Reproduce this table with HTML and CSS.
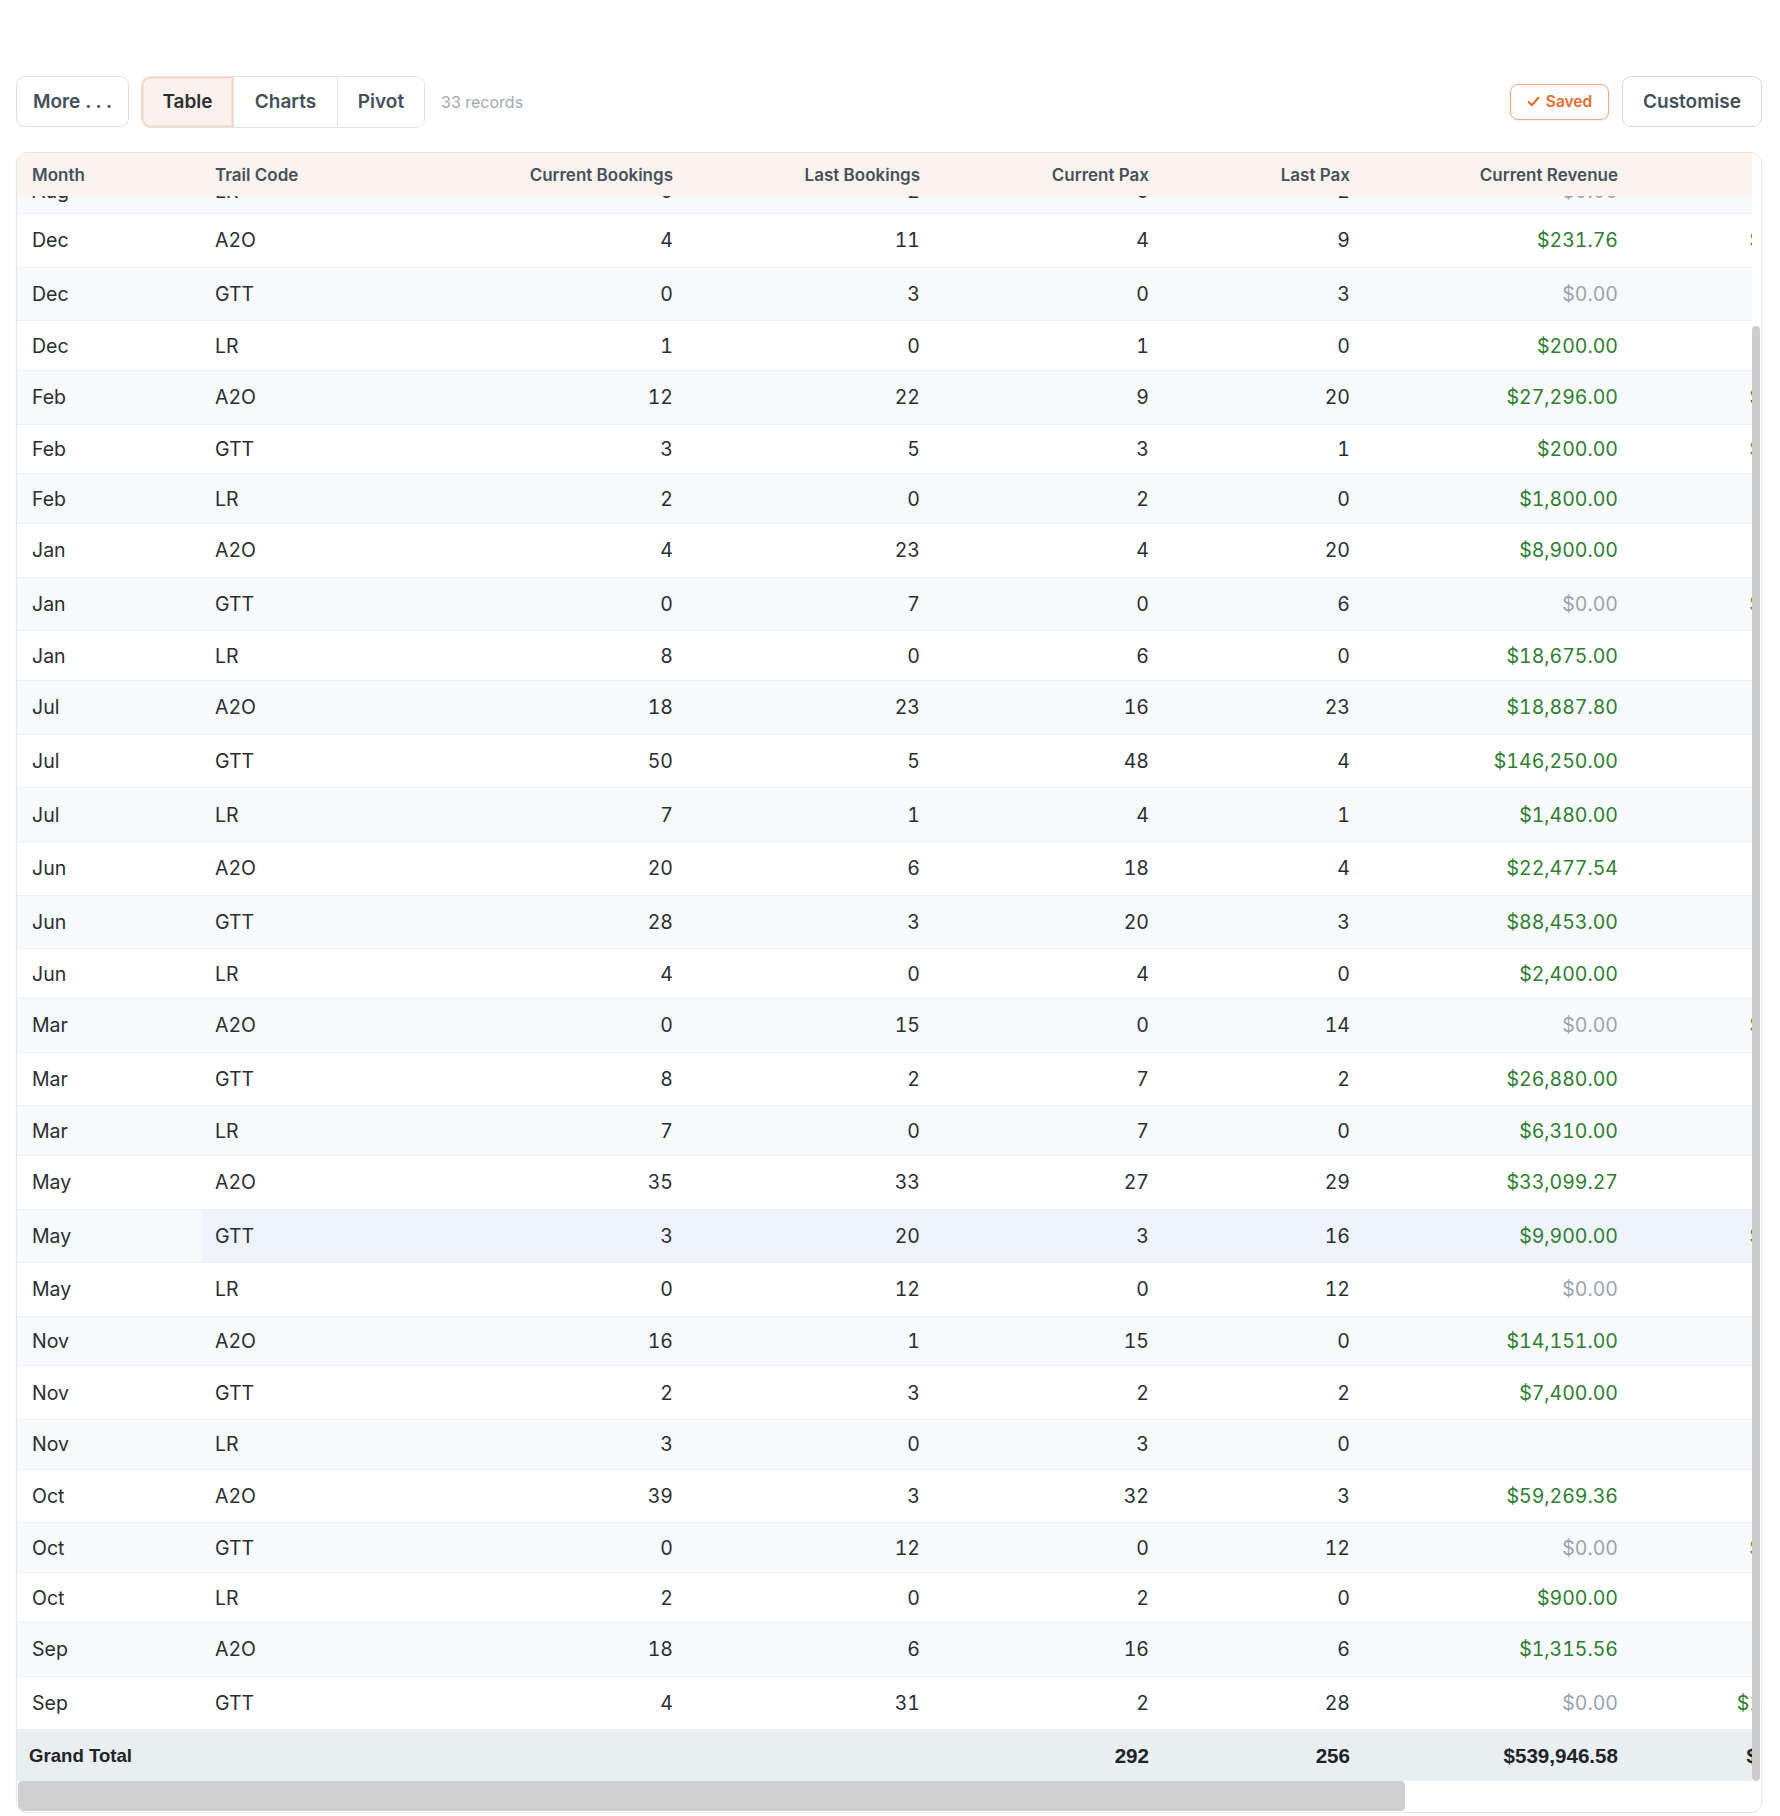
FILE: index.html
```html
<!DOCTYPE html>
<html lang="en">
<head>
<meta charset="utf-8">
<title>Trail bookings</title>
<link rel="stylesheet" href="styles.css">
</head>
<body>
<div class="page">
  <div class="toolbar">
    <div class="tb-left">
      <button class="btn btn-more">More . . .</button>
      <div class="seg">
        <button class="seg-btn active">Table</button>
        <button class="seg-btn">Charts</button>
        <button class="seg-btn">Pivot</button>
      </div>
      <span class="records">33 records</span>
    </div>
    <div class="tb-right">
      <span class="saved"><svg class="check" viewBox="0 0 12 12" width="13" height="13"><polyline points="1.5,6.5 4.5,9.5 10.5,2.5" fill="none" stroke="currentColor" stroke-width="1.9" stroke-linecap="round" stroke-linejoin="round"/></svg>Saved</span>
      <button class="btn btn-custom">Customise</button>
    </div>
  </div>

  <div class="grid-box">
    <div class="grid-main">
      <div class="viewport">
        <div class="row head">
          <div class="c">Month</div>
          <div class="c">Trail Code</div>
          <div class="c r">Current Bookings</div>
          <div class="c r">Last Bookings</div>
          <div class="c r">Current Pax</div>
          <div class="c r">Last Pax</div>
          <div class="c r">Current Revenue</div>
          <div class="c r">Last Rev.</div>
        </div>

        <div class="row partial alt">
          <div class="c">Aug</div><div class="c">LR</div><div class="c r">0</div><div class="c r">2</div><div class="c r">0</div><div class="c r">2</div><div class="c r zero">$0.00</div><div class="c r zero">$0.00</div>
        </div>

        <div class="row tall">
          <div class="c">Dec</div><div class="c">A2O</div><div class="c r">4</div><div class="c r">11</div><div class="c r">4</div><div class="c r">9</div><div class="c r pos">$231.76</div><div class="c r pos">$12,345.67</div>
        </div>
        <div class="row tall alt">
          <div class="c">Dec</div><div class="c">GTT</div><div class="c r">0</div><div class="c r">3</div><div class="c r">0</div><div class="c r">3</div><div class="c r zero">$0.00</div><div class="c r pos">$2,400.00</div>
        </div>
        <div class="row short">
          <div class="c">Dec</div><div class="c">LR</div><div class="c r">1</div><div class="c r">0</div><div class="c r">1</div><div class="c r">0</div><div class="c r pos">$200.00</div><div class="c r zero">$0.00</div>
        </div>
        <div class="row tall alt">
          <div class="c">Feb</div><div class="c">A2O</div><div class="c r">12</div><div class="c r">22</div><div class="c r">9</div><div class="c r">20</div><div class="c r pos">$27,296.00</div><div class="c r pos">$31,250.00</div>
        </div>
        <div class="row short">
          <div class="c">Feb</div><div class="c">GTT</div><div class="c r">3</div><div class="c r">5</div><div class="c r">3</div><div class="c r">1</div><div class="c r pos">$200.00</div><div class="c r pos">$14,600.00</div>
        </div>
        <div class="row short alt">
          <div class="c">Feb</div><div class="c">LR</div><div class="c r">2</div><div class="c r">0</div><div class="c r">2</div><div class="c r">0</div><div class="c r pos">$1,800.00</div><div class="c r zero">$0.00</div>
        </div>
        <div class="row tall">
          <div class="c">Jan</div><div class="c">A2O</div><div class="c r">4</div><div class="c r">23</div><div class="c r">4</div><div class="c r">20</div><div class="c r pos">$8,900.00</div><div class="c r pos">$9,860.00</div>
        </div>
        <div class="row tall alt">
          <div class="c">Jan</div><div class="c">GTT</div><div class="c r">0</div><div class="c r">7</div><div class="c r">0</div><div class="c r">6</div><div class="c r zero">$0.00</div><div class="c r pos">$21,900.00</div>
        </div>
        <div class="row short">
          <div class="c">Jan</div><div class="c">LR</div><div class="c r">8</div><div class="c r">0</div><div class="c r">6</div><div class="c r">0</div><div class="c r pos">$18,675.00</div><div class="c r zero">$0.00</div>
        </div>
        <div class="row tall alt">
          <div class="c">Jul</div><div class="c">A2O</div><div class="c r">18</div><div class="c r">23</div><div class="c r">16</div><div class="c r">23</div><div class="c r pos">$18,887.80</div><div class="c r pos">$4,120.00</div>
        </div>
        <div class="row tall">
          <div class="c">Jul</div><div class="c">GTT</div><div class="c r">50</div><div class="c r">5</div><div class="c r">48</div><div class="c r">4</div><div class="c r pos">$146,250.00</div><div class="c r pos">$7,300.00</div>
        </div>
        <div class="row tall alt">
          <div class="c">Jul</div><div class="c">LR</div><div class="c r">7</div><div class="c r">1</div><div class="c r">4</div><div class="c r">1</div><div class="c r pos">$1,480.00</div><div class="c r pos">$600.00</div>
        </div>
        <div class="row tall">
          <div class="c">Jun</div><div class="c">A2O</div><div class="c r">20</div><div class="c r">6</div><div class="c r">18</div><div class="c r">4</div><div class="c r pos">$22,477.54</div><div class="c r pos">$3,940.00</div>
        </div>
        <div class="row tall alt">
          <div class="c">Jun</div><div class="c">GTT</div><div class="c r">28</div><div class="c r">3</div><div class="c r">20</div><div class="c r">3</div><div class="c r pos">$88,453.00</div><div class="c r pos">$5,400.00</div>
        </div>
        <div class="row short">
          <div class="c">Jun</div><div class="c">LR</div><div class="c r">4</div><div class="c r">0</div><div class="c r">4</div><div class="c r">0</div><div class="c r pos">$2,400.00</div><div class="c r zero">$0.00</div>
        </div>
        <div class="row tall alt">
          <div class="c">Mar</div><div class="c">A2O</div><div class="c r">0</div><div class="c r">15</div><div class="c r">0</div><div class="c r">14</div><div class="c r zero">$0.00</div><div class="c r pos">$18,320.00</div>
        </div>
        <div class="row tall">
          <div class="c">Mar</div><div class="c">GTT</div><div class="c r">8</div><div class="c r">2</div><div class="c r">7</div><div class="c r">2</div><div class="c r pos">$26,880.00</div><div class="c r pos">$3,600.00</div>
        </div>
        <div class="row short alt">
          <div class="c">Mar</div><div class="c">LR</div><div class="c r">7</div><div class="c r">0</div><div class="c r">7</div><div class="c r">0</div><div class="c r pos">$6,310.00</div><div class="c r zero">$0.00</div>
        </div>
        <div class="row tall">
          <div class="c">May</div><div class="c">A2O</div><div class="c r">35</div><div class="c r">33</div><div class="c r">27</div><div class="c r">29</div><div class="c r pos">$33,099.27</div><div class="c r pos">$8,700.00</div>
        </div>
        <div class="row tall alt hl">
          <div class="c">May</div><div class="c">GTT</div><div class="c r">3</div><div class="c r">20</div><div class="c r">3</div><div class="c r">16</div><div class="c r pos">$9,900.00</div><div class="c r pos">$28,800.00</div>
        </div>
        <div class="row tall">
          <div class="c">May</div><div class="c">LR</div><div class="c r">0</div><div class="c r">12</div><div class="c r">0</div><div class="c r">12</div><div class="c r zero">$0.00</div><div class="c r pos">$9,600.00</div>
        </div>
        <div class="row short alt">
          <div class="c">Nov</div><div class="c">A2O</div><div class="c r">16</div><div class="c r">1</div><div class="c r">15</div><div class="c r">0</div><div class="c r pos">$14,151.00</div><div class="c r zero">$0.00</div>
        </div>
        <div class="row tall">
          <div class="c">Nov</div><div class="c">GTT</div><div class="c r">2</div><div class="c r">3</div><div class="c r">2</div><div class="c r">2</div><div class="c r pos">$7,400.00</div><div class="c r pos">$6,200.00</div>
        </div>
        <div class="row short alt">
          <div class="c">Nov</div><div class="c">LR</div><div class="c r">3</div><div class="c r">0</div><div class="c r">3</div><div class="c r">0</div><div class="c r"></div><div class="c r zero">$0.00</div>
        </div>
        <div class="row tall">
          <div class="c">Oct</div><div class="c">A2O</div><div class="c r">39</div><div class="c r">3</div><div class="c r">32</div><div class="c r">3</div><div class="c r pos">$59,269.36</div><div class="c r pos">$2,950.00</div>
        </div>
        <div class="row short alt">
          <div class="c">Oct</div><div class="c">GTT</div><div class="c r">0</div><div class="c r">12</div><div class="c r">0</div><div class="c r">12</div><div class="c r zero">$0.00</div><div class="c r pos">$43,200.00</div>
        </div>
        <div class="row short">
          <div class="c">Oct</div><div class="c">LR</div><div class="c r">2</div><div class="c r">0</div><div class="c r">2</div><div class="c r">0</div><div class="c r pos">$900.00</div><div class="c r zero">$0.00</div>
        </div>
        <div class="row tall alt">
          <div class="c">Sep</div><div class="c">A2O</div><div class="c r">18</div><div class="c r">6</div><div class="c r">16</div><div class="c r">6</div><div class="c r pos">$1,315.56</div><div class="c r pos">$5,210.00</div>
        </div>
        <div class="row tall">
          <div class="c">Sep</div><div class="c">GTT</div><div class="c r">4</div><div class="c r">31</div><div class="c r">2</div><div class="c r">28</div><div class="c r zero">$0.00</div><div class="c r pos">$112,600.00</div>
        </div>

        <div class="row total">
          <div class="c label">Grand Total</div><div class="c"></div><div class="c r"></div><div class="c r"></div><div class="c r">292</div><div class="c r">256</div><div class="c r">$539,946.58</div><div class="c r">$612,345.67</div>
        </div>
      </div>
      <div class="vscroll"><div class="vthumb"></div></div>
    </div>
    <div class="hscroll"><div class="hthumb"></div></div>
  </div>
</div>
</body>
</html>
```

FILE: styles.css
```css
* { box-sizing: border-box; }

body {
  margin: 0;
  background: #ffffff;
  font-family: Inter, "Noto Sans", "Liberation Sans", sans-serif;
  color: #2c3136;
}

.page {
  padding: 76px 18px 0 16px;
}

/* ---------- toolbar ---------- */
.toolbar {
  display: flex;
  align-items: center;
  justify-content: space-between;
  height: 51px;
}

.tb-left, .tb-right {
  display: flex;
  align-items: center;
}

.btn {
  font-family: Inter, "Liberation Sans", sans-serif;
  font-weight: 600;
  font-size: 19px;
  color: #44505a;
  background: #ffffff;
  border: 1px solid #dde1e5;
  border-radius: 9px;
  height: 51px;
  padding: 0;
  cursor: pointer;
}

.btn-more { width: 113px; }

.seg {
  display: flex;
  margin-left: 12px;
  height: 52px;
  border: 1px solid #dfe3e6;
  border-radius: 9px;
  overflow: hidden;
}

.seg-btn {
  font-family: Inter, "Liberation Sans", sans-serif;
  font-weight: 600;
  font-size: 19px;
  color: #44505a;
  background: #ffffff;
  border: 0;
  border-left: 1px solid #e3e6e9;
  padding: 0;
  height: 100%;
}
.seg-btn:first-child { border-left: 0; width: 91px; }
.seg-btn:nth-child(2) { width: 104px; }
.seg-btn:nth-child(3) { width: 87px; }

.seg-btn.active {
  background: #fcf1ec;
  color: #2a2f33;
  box-shadow: inset 0 0 0 1.5px #f7d4c0;
  border-radius: 8px 0 0 8px;
}

.records {
  margin-left: 16px;
  font-size: 16px;
  color: #a4aab1;
}

.saved {
  display: inline-flex;
  align-items: center;
  justify-content: center;
  gap: 6px;
  width: 99px;
  height: 36px;
  border: 1px solid #f4aa80;
  border-radius: 8px;
  background: #ffffff;
  color: #ec6a2b;
  font-weight: 600;
  font-size: 15.5px;
  box-shadow: 0 1px 3px rgba(0, 0, 0, 0.07);
}
.check { display: block; }

.btn-custom {
  width: 140px;
  margin-left: 13px;
  border-color: #d6dade;
}

/* ---------- grid ---------- */
.grid-box {
  margin-top: 25px;
  border: 1px solid #e4e7ea;
  border-radius: 11px;
  overflow: hidden;
  display: flex;
  flex-direction: column;
  box-shadow: 0 1px 3px rgba(0, 0, 0, 0.04);
}

.grid-main {
  display: flex;
}

.viewport {
  flex: 1;
  overflow: hidden;
  min-width: 0;
}

.row {
  display: grid;
  grid-template-columns: 185px 240px 243px 247px 229px 201px 268px 243px;
  width: max-content;
  min-width: 100%;
  background: #ffffff;
  border-bottom: 1px solid #eceef1;
}

.row.alt { background: #f8f9fb; }

.c {
  display: flex;
  align-items: center;
  padding: 0 12px 0 15px;
  font-size: 19.5px;
  font-variant-numeric: tabular-nums;
  white-space: nowrap;
  color: #2a2e33;
}
.c:nth-child(2) { padding-left: 13px; }
.c.r { justify-content: flex-end; padding-left: 0; padding-right: 12px; }

.c.pos { color: #2e7d32; }
.c.zero { color: #9ca3af; }

.row.tall { height: 53.6px; }
.row.short { height: 49.8px; }

.row.hl .c + .c { background: #eff3fe; }

.row.head {
  height: 43px;
  background: #fcf3ef;
  border-bottom: 0;
}
.row.head .c {
  font-size: 17px;
  font-weight: 600;
  color: #45525c;
  font-variant-numeric: normal;
}

.row.partial {
  height: 18px;
  grid-template-rows: 17px;
  align-items: unsafe end;
  overflow: hidden;
}
.row.partial .c { height: 44px; }

.row.total {
  height: 51px;
  background: #e9eef1;
  border-bottom: 0;
}
.row.total .c {
  font-family: "Liberation Sans", Arial, sans-serif;
  font-weight: 700;
  font-size: 20.6px;
  color: #202428;
}
.row.total .c.label {
  font-size: 18.6px;
  padding-left: 12px;
}

.vscroll {
  width: 9px;
  display: flex;
  flex-direction: column;
  background: #ffffff;
}
.vthumb {
  flex: 1;
  margin-top: 173px;
  width: 8px;
  background: #cdcdcd;
  border-radius: 4px;
}

.hscroll {
  height: 31px;
  padding-left: 1px;
  background: #ffffff;
}
.hthumb {
  width: 1387px;
  height: 30px;
  background: #cfcfcf;
  border-radius: 4px;
}
```
